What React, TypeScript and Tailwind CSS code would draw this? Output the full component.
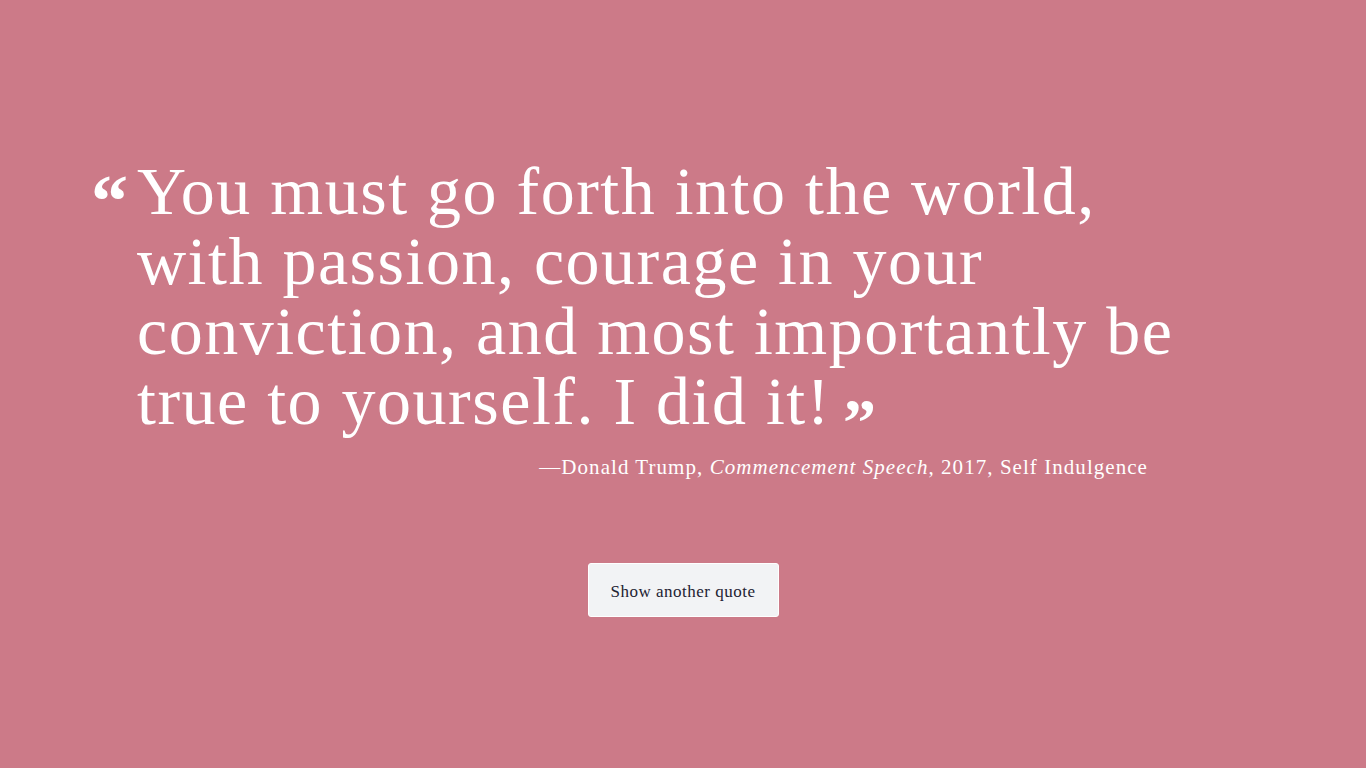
import React from "react";

const quote = {
  lines: [
    "You must go forth into the world,",
    "with passion, courage in your",
    "conviction, and most importantly be",
    "true to yourself. I did it!",
  ],
  author: "Donald Trump",
  source: "Commencement Speech",
  year: "2017",
  tag: "Self Indulgence",
};

export default function App() {
  return (
    <div
      className="min-h-screen w-full bg-[#cc7a88] text-white flex flex-col items-center pt-[156px]"
      style={{ fontFamily: '"Liberation Serif", "DejaVu Serif", serif' }}
    >
      <div className="w-[1178px] flex flex-col">
        <blockquote className="flex">
          <span className="w-[46px] -ml-[3px] shrink-0 text-[74px] leading-[1] font-bold pt-[8px]">
            &ldquo;
          </span>
          <p className="text-[68px] leading-[70px] tracking-[1.5px]">
            {quote.lines.map((line, i) => (
              <React.Fragment key={i}>
                {line}
                {i < quote.lines.length - 1 ? <br /> : null}
              </React.Fragment>
            ))}
            <span className="inline-block ml-[12px] text-[66px] leading-[0] font-bold translate-y-[20px]">
              &rdquo;
            </span>
          </p>
        </blockquote>
        <p className="mt-[17px] pr-[124px] text-right text-[21px] leading-[28px] tracking-[1.05px]">
          &mdash;{quote.author}, <i>{quote.source}</i>, {quote.year}, {quote.tag}
        </p>
      </div>
      <button className="mt-[82px] w-[191px] h-[54px] pt-[3px] bg-[#f2f3f5] border border-white rounded-[3px] text-[#222232] text-[17px] tracking-[0.5px]">
        Show another quote
      </button>
    </div>
  );
}
